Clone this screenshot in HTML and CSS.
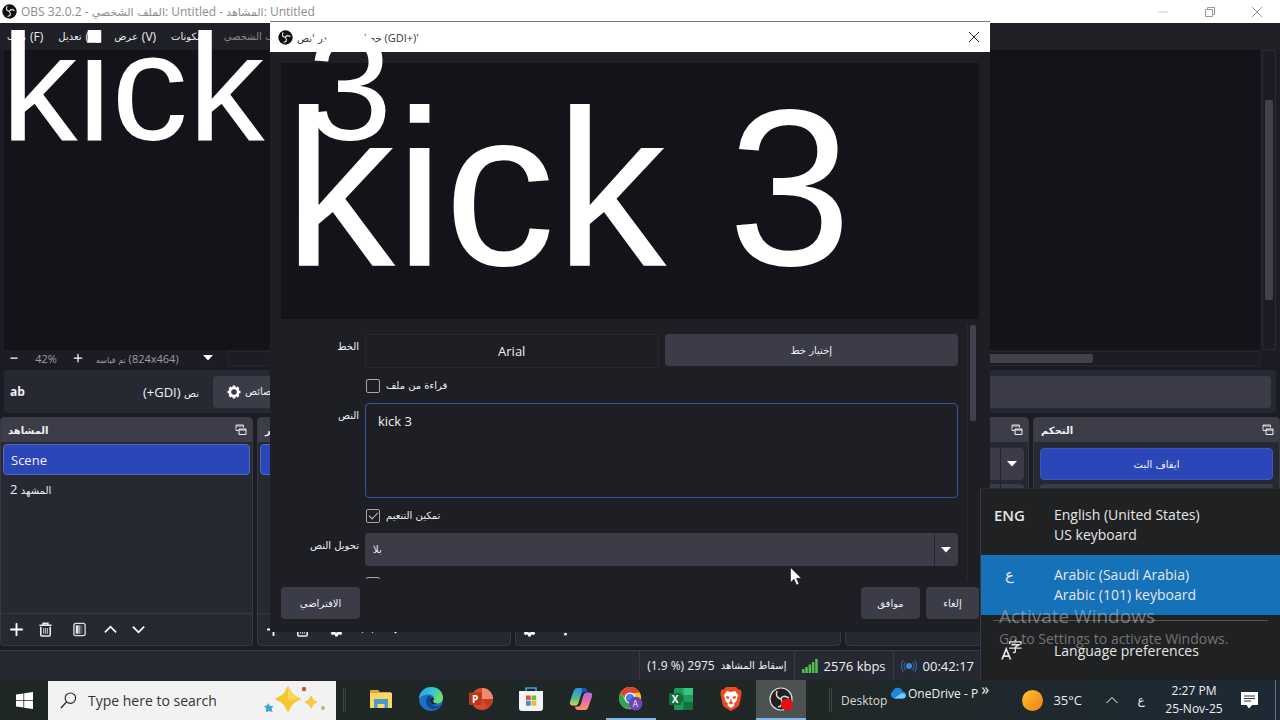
FILE: index.html
```
<!DOCTYPE html>
<html lang="ar">
<head>
  <meta charset="UTF-8">
  <meta name="viewport" content="width=device-width, initial-scale=1.0">
  <title>OBS 32.0.2</title>
  <link rel="stylesheet" href="styles.css">
</head>
<body>
  <svg class="defs" width="0" height="0" aria-hidden="true">
    <symbol id="i-obs" viewBox="0 0 24 24">
      <circle cx="12" cy="12" r="11.5" fill="#111"/>
      <g fill="none" stroke="#e8e8e8" stroke-width="1.7" stroke-linecap="round">
        <path d="M8 4.2c-1.6 3.6-.6 6.600 3.300 7.500"/>
        <path d="M19.500 10.500c-3.600-2-7.200-1.500-7.800 1.400"/>
        <path d="M9.500 19.700c3.800-.6 5.200-4 2.500-7.300"/>
      </g>
      <path d="M8 4.200c-2 3.300-.3 6.700 3 7.100-3.800 1.200-6.500-3.600-3-7.100zM19.700 10.300c-2.700-2.800-6.500-2.500-7.400.7-.4-3.900 5.400-5.300 7.400-.7zM9.300 19.900c3.900-.4 5.500-3.800 3.200-6.400 3.400 2.300 1.300 7.300-3.200 6.400z" fill="#e8e8e8"/>
    </symbol>
    <symbol id="i-plus" viewBox="0 0 16 16"><path d="M8 2v12M2 8h12" stroke="#fff" stroke-width="2" stroke-linecap="round"/></symbol>
    <symbol id="i-minus" viewBox="0 0 16 16"><path d="M3 8h10" stroke="#fff" stroke-width="2" stroke-linecap="round"/></symbol>
    <symbol id="i-trash" viewBox="0 0 16 16"><path d="M1.500 3.500h13M5.500 3V1.500h5V3M3 5v8.500q0 1.500 1.500 1.500h7q1.500 0 1.500-1.500V5" fill="none" stroke="#e8e8ee" stroke-width="1.700"/><path d="M6 6.500v6M8 6.500v6M10 6.500v6" stroke="#b8b8c0" stroke-width="1.200"/></symbol>
    <symbol id="i-filter" viewBox="0 0 16 16"><rect x="2" y="1.500" width="12" height="13" rx="2" fill="#2a2b34" stroke="#dcdce2" stroke-width="1.400"/><path d="M4 3.500h3v9H4z" fill="#e8e8ee"/><path d="M7 3.500h2v9H7z" fill="#a4a4ac"/><path d="M9 3.500h2v9H9z" fill="#5c5d68"/></symbol>
    <symbol id="i-up" viewBox="0 0 16 16"><path d="M2 11l6-6 6 6" fill="none" stroke="#fff" stroke-width="1.800"/></symbol>
    <symbol id="i-down" viewBox="0 0 16 16"><path d="M2 5l6 6 6-6" fill="none" stroke="#fff" stroke-width="1.800"/></symbol>
    <symbol id="i-gear" viewBox="0 0 16 16"><circle cx="8" cy="8" r="4.700" fill="none" stroke="#fff" stroke-width="3"/><g stroke="#fff" stroke-width="3"><path d="M8 .6v2.400M8 13v2.400M.6 8H3M13 8h2.400M2.800 2.800l1.700 1.700M11.500 11.500l1.700 1.700M2.800 13.200l1.700-1.700M11.500 4.500l1.700-1.700"/></g></symbol>
    <symbol id="i-float" viewBox="0 0 12 12"><path d="M4 6.500H1V1h7.500v2.500M1 2h7.500" fill="none" stroke="#d8d8de" stroke-width="1"/><path d="M4 5h7v5.500H4zM4 6h7" fill="#3c3d48" stroke="#f0f0f4" stroke-width="1"/></symbol>
    <symbol id="i-tri" viewBox="0 0 10 6"><path d="M0 0h10L5 5.500z" fill="#fff"/></symbol>
    <symbol id="i-dots" viewBox="0 0 16 16"><circle cx="8" cy="2.500" r="1.500" fill="#fff"/><circle cx="8" cy="8" r="1.500" fill="#fff"/><circle cx="8" cy="13" r="1.500" fill="#fff"/></symbol>
    <symbol id="i-close" viewBox="0 0 12 12"><path d="M1 1l10 10M11 1L1 11" stroke="currentColor" stroke-width="1" fill="none"/></symbol>
  </svg>

  <div class="desktop">
    <div class="obs">
      <header class="titlebar">
        <svg class="logo"><use href="#i-obs"/></svg>
        <span class="title">OBS 32.0.2 - <span class="ar">الملف الشخصي</span>: Untitled - <span class="ar">المشاهد</span>: Untitled</span>
        <div class="window-buttons">
          <button aria-label="Minimize"><svg viewBox="0 0 12 12"><path d="M1 6h10" stroke="#ccc"/></svg></button>
          <button aria-label="Restore"><svg viewBox="0 0 12 12"><path d="M1.500 3.500h7v7h-7zM3.500 3.500v-2h7v7h-2" fill="none" stroke="#999"/></svg></button>
          <button aria-label="Close"><svg><use href="#i-close"/></svg></button>
        </div>
      </header>

      <nav class="menubar">
        <button><span class="ar">ملف</span> (F)</button>
        <button><span class="ar">تعديل</span> (E)</button>
        <button><span class="ar">عرض</span> (V)</button>
        <button><span class="ar">المكونات</span></button>
        <button class="dim"><span class="ar">الملف الشخصي</span></button>
      </nav>

      <main class="preview">
        <div class="canvas"></div>
        <div class="vscroll"><div class="thumb"></div></div>
        <div class="zoombar">
          <button aria-label="Zoom out"><svg><use href="#i-minus"/></svg></button>
          <span class="percent">42%</span>
          <button aria-label="Zoom in"><svg><use href="#i-plus"/></svg></button>
          <span class="scale"><span class="ar">تم قياسه</span> (824x464)</span>
          <button class="scale-menu" aria-label="Scaling"><svg><use href="#i-tri"/></svg></button>
          <div class="hscroll"><div class="thumb"></div></div>
        </div>
      </main>

      <section class="source-bar">
        <b>ab</b>
        <span class="source-name" dir="rtl"><span class="ar">نص</span> (GDI+)</span>
        <button class="props"><svg><use href="#i-gear"/></svg><span class="ar">خصائص</span></button>
        <div class="source-field"></div>
      </section>

      <section class="docks">
        <div class="dock">
          <h2><span class="ar">المشاهد</span><svg><use href="#i-float"/></svg></h2>
          <ul class="list">
            <li class="selected">Scene</li>
            <li><span dir="rtl"><span class="ar">المشهد</span> 2</span></li>
          </ul>
          <div class="tools">
            <button aria-label="Add scene"><svg><use href="#i-plus"/></svg></button>
            <button aria-label="Remove scene"><svg><use href="#i-trash"/></svg></button>
            <button aria-label="Filters"><svg><use href="#i-filter"/></svg></button>
            <button aria-label="Move up"><svg><use href="#i-up"/></svg></button>
            <button aria-label="Move down"><svg><use href="#i-down"/></svg></button>
          </div>
        </div>
        <div class="dock">
          <h2><span class="ar">المصادر</span></h2>
          <ul class="list"><li class="selected"></li></ul>
          <div class="tools">
            <button aria-label="Add source"><svg><use href="#i-plus"/></svg></button>
            <button aria-label="Remove source"><svg><use href="#i-trash"/></svg></button>
            <button aria-label="Source properties"><svg><use href="#i-gear"/></svg></button>
            <button aria-label="Move up"><svg><use href="#i-up"/></svg></button>
            <button aria-label="Move down"><svg><use href="#i-down"/></svg></button>
          </div>
        </div>
        <div class="dock">
          <h2></h2>
          <div class="list"></div>
          <div class="tools mixer-tools">
            <button aria-label="Audio settings"><svg><use href="#i-gear"/></svg></button>
            <button aria-label="Mixer menu"><svg><use href="#i-dots"/></svg></button>
          </div>
        </div>
        <div class="dock">
          <h2><svg><use href="#i-float"/></svg></h2>
          <div class="transitions">
            <button class="combo" aria-label="Transition"><svg><use href="#i-tri"/></svg></button>
            <button class="combo" aria-label="Duration"></button>
          </div>
        </div>
        <div class="dock">
          <h2><span class="ar">التحكم</span><svg><use href="#i-float"/></svg></h2>
          <div class="controls">
            <button class="primary ar">ايقاف البث</button>
            <button aria-label="Record"></button>
          </div>
        </div>
      </section>

      <footer class="statusbar">
        <span>(1.9 %) 2975 <span class="ar">إسقاط المشاهد</span></span>
        <span>
          <svg class="bars" viewBox="0 0 16 14"><path d="M0 10h2.500v4H0zM3.300 8h2.500v6H3.300zM6.600 5.500h2.500V14H6.600zM9.900 3h2.500v11H9.900zM13.200 0h2.500v14h-2.500z" fill="#4fc54f"/></svg>
          2576 kbps
        </span>
        <span>
          <svg class="live" viewBox="0 0 16 14"><circle cx="8" cy="7" r="3" fill="#3b86d8"/><path d="M4.500 3q-3 4 0 8M11.500 3q3 4 0 8M2.300 1q-3.600 6 0 12M13.700 1q3.600 6 0 12" fill="none" stroke="#2d619b" stroke-width="1.200"/></svg>
          00:42:17
        </span>
      </footer>
    </div>

    <div class="taskbar">
      <button class="start" aria-label="Start"><svg viewBox="0 0 16 16"><path d="M0 2.300L7 1.300v6.300H0zM7.700 1.200L16 0v7.600H7.700zM0 8.300h7v6.300l-7-1zM7.700 8.300H16V16l-8.300-1.200z" fill="#fff"/></svg></button>
      <div class="search">
        <svg class="lens" viewBox="0 0 18 18"><circle cx="11" cy="6.500" r="5.500" fill="none" stroke="#222" stroke-width="1.200"/><path d="M7 10.500L1 17" stroke="#222" stroke-width="1.400"/></svg>
        <input type="text" placeholder="Type here to search" aria-label="Search">
        <svg class="sparkle" viewBox="0 0 62 28">
          <path d="M24 1q3 9 12 12-9 3-12 12-3-9-12-12 9-3 12-12z" fill="#f7c52d" stroke="#f7c52d" stroke-width="1.500" stroke-linejoin="round"/>
          <path d="M24 1q3 9 12 12l-12 1z" fill="#fbd95c"/>
          <path d="M47 10q1.500 5 6 6-4.500 1.500-6 6-1.500-4.500-6-6 4.500-1 6-6z" fill="#f5c944" stroke="#f5c944" stroke-linejoin="round"/>
          <path d="M4 17l2 3 3.500 0-2 2.500 1 3.500-3.500-1-3 1.500V22L0 20l3-.5z" fill="#35a9d0"/>
          <circle cx="40" cy="3" r="2.200" fill="#bd5a34"/><circle cx="59" cy="22" r="2" fill="#9bc56b"/>
        </svg>
      </div>
      <div class="divider"></div>
      <div class="apps">
        <button aria-label="File Explorer"><svg viewBox="0 0 24 24"><path d="M1 3h8l2 2h11v4H1z" fill="#d9a634"/><path d="M1 6h22v15H1z" fill="#fbd767"/><path d="M5 12h14v9h-3.500v-4h-7v4H5z" fill="#4a9cc4"/></svg></button>
        <button aria-label="Edge"><svg viewBox="0 0 24 24">
          <defs><linearGradient id="edge" x1="0" y1="0" x2="1" y2=".4"><stop offset="0" stop-color="#2b9be0"/><stop offset=".55" stop-color="#32c4d8"/><stop offset="1" stop-color="#6be06b"/></linearGradient></defs>
          <circle cx="12" cy="12" r="12" fill="#1c6fc4"/><path d="M0 11C1 4 6 0 12 0c7 0 12 5 12 10.500 0 4-3 6-6 6-2.500 0-4-1-4-2 0-.8 1-1.300 1-3 0-2.500-2.500-4-5.500-4-4 0-8 2-9.500 4z" fill="url(#edge)"/><path d="M9 9c-4 4-2 11 4 13 3 .6 6-1 9-4-5 2.500-10 1-11-3-.4-2 .3-4 1.500-5.500C11.500 8.500 10 8.500 9 9z" fill="#12458f"/><path d="M15 11c0 2-1 2.300-1 3.300 0 1.200 1.500 2.200 4 2.200-3 2-7 .5-7-3 0-2 2-3.500 4-2.500z" fill="#1e2827"/></svg></button>
        <button aria-label="PowerPoint"><svg viewBox="0 0 24 24"><circle cx="13" cy="12" r="11" fill="#d8492c"/><path d="M13 1a11 11 0 0 1 11 11H13z" fill="#f08a6c"/><path d="M13 12h11a11 11 0 0 1-5 9z" fill="#c23d20"/><rect x="0" y="5.500" width="12.500" height="12.500" rx="1" fill="#b7361e"/><text x="3" y="15.500" font-size="10" font-weight="700" fill="#fff" font-family="Open Sans">P</text></svg></button>
        <button aria-label="Store"><svg viewBox="0 0 24 24"><path d="M7 4V1h10v3" fill="none" stroke="#3ba3dc" stroke-width="1.600"/><path d="M0 4h24v17q0 3-3 3H3q-3 0-3-3z" fill="#f3f4f5"/><path d="M7 8.500h4.700v4.700H7z" fill="#dd5633"/><path d="M12.500 8.500h4.700v4.700h-4.700z" fill="#7ab83a"/><path d="M7 14h4.700v4.700H7z" fill="#2a93d4"/><path d="M12.500 14h4.700v4.700h-4.700z" fill="#f2b825"/></svg></button>
        <button aria-label="Copilot"><svg viewBox="0 0 24 24">
          <defs><linearGradient id="cpa" x1="0" y1="0" x2="0" y2="1"><stop offset="0" stop-color="#2a8fe8"/><stop offset=".6" stop-color="#52bd92"/><stop offset="1" stop-color="#e8d043"/></linearGradient><linearGradient id="cpb" x1="0" y1="0" x2="0" y2="1"><stop offset="0" stop-color="#b069e8"/><stop offset=".5" stop-color="#ee6aa8"/><stop offset="1" stop-color="#f79b60"/></linearGradient></defs>
          <path d="M8 1h7q2.500 0 3 3.500h-3q-2 0-2.800 2.500L9.500 16q-.8 2.500-3 2.500H4q-4 0-3-4L4.500 4.500Q5.500 1 8 1z" fill="url(#cpa)"/><path d="M16 23H9q-2.500 0-3-3.500h3q2 0 2.800-2.500l2.700-9q.8-2.500 3-2.500H20q4 0 3 4l-3.500 10q-1 3.500-3.500 3.500z" fill="url(#cpb)"/><path d="M13 1h2q2.500 0 3 3.500h-3q-1.500 0-2.500 2z" fill="#1c4fc0"/></svg></button>
        <button class="running" aria-label="Chrome"><svg viewBox="0 0 26 26"><circle cx="12" cy="12" r="12" fill="#f6c531"/><path d="M1.600 6A12 12 0 0 1 22.400 6L12 7 8 14z" fill="#dc4335"/><path d="M1.600 6a12 12 0 0 0 9.400 18l5-9H7z" fill="#31a152"/><circle cx="12" cy="12" r="6" fill="#fff"/><circle cx="12" cy="12" r="4.700" fill="#4384ee"/><circle cx="18" cy="18" r="7.500" fill="#7043b4"/><text x="14.800" y="21.500" font-size="9" fill="#eee" font-family="Open Sans">A</text></svg></button>
        <button aria-label="Excel"><svg viewBox="0 0 24 24"><rect x="5" y="1" width="19" height="22" rx="1.500" fill="#1f9a5a"/><path d="M14.500 1H24v7h-9.500z" fill="#35c481"/><path d="M5 8h9.500v7H5zM14.500 15H24v6.500q0 1.500-1.500 1.500h-8z" fill="#12713c"/><rect x="0" y="6" width="12" height="12" rx="1" fill="#127040"/><text x="2.700" y="15.700" font-size="10" font-weight="700" fill="#fff" font-family="Open Sans">X</text></svg></button>
        <button aria-label="Brave"><svg viewBox="0 0 24 24"><path d="M7 0h10l2.500 2.500 2.500.5.500 4-2 10q-.7 2-2.500 3.500L12 24l-6-3.500Q4.200 19 3.500 17l-2-10L2 3l2.500-.5z" fill="#ee4a23"/><path d="M8 4l4 1 4-1 3 4-1.500 6-2.500 2.500.5 2L12 21l-3.500-2.500.5-2L6.500 14 5 8z" fill="#fff"/><path d="M7 9l3.500.7-1 2.300-2-.5zM17 9l-3.500.7 1 2.300 2-.5zM12 11l1 4 1.500 1-2.500 1.500L9.500 16l1.500-1z" fill="#ee4a23"/></svg></button>
        <button class="running active" aria-label="OBS"><svg viewBox="0 0 24 24"><circle cx="12" cy="12" r="11" fill="#211f20" stroke="#ddd" stroke-width="1.200"/><path d="M8 4c-1.500 4 0 7 4 8M20 11c-4-2.500-7.500-2-8 1M9 20c4-.5 5.500-4 3-8" fill="none" stroke="#d8d8d8" stroke-width="1.600"/><circle cx="18" cy="17.500" r="6" fill="#e60f0f"/></svg></button>
      </div>
      <div class="divider"></div>
      <span class="desk-label">Desktop</span>
      <span class="onedrive"><svg viewBox="0 0 16 12"><path d="M4 11.500A4 4 0 0 1 3 4 5 5 0 0 1 12.500 4.500a3.500 3.500 0 0 1 0 7z" fill="#2187dd"/><path d="M4 11.500l7-5q4-1 4.800 2-.3 3-3.300 3z" fill="#73cdfa"/></svg>OneDrive - P</span>
      <span class="more">»</span>
      <div class="weather"><svg viewBox="0 0 20 20"><defs><linearGradient id="sun" x1="0" y1="0" x2="1" y2="1"><stop offset="0" stop-color="#fdc435"/><stop offset="1" stop-color="#f27d12"/></linearGradient></defs><circle cx="10" cy="10" r="10" fill="url(#sun)"/></svg>35°C</div>
      <button class="tray" aria-label="Show hidden icons"><svg viewBox="0 0 12 12"><path d="M.5 9L6 3.500 11.500 9" fill="none" stroke="#fff"/></svg></button>
      <span class="input-lang ar">ع</span>
      <div class="clock"><time>2:27 PM</time><time>25-Nov-25</time></div>
      <button class="notify" aria-label="Notifications"><svg viewBox="0 0 17 17"><path d="M0 0h17v13h-6l-3 3.500L5.500 13H0z" fill="#fff"/><path d="M3 4h11M3 6.500h11M3 9h7" stroke="#333"/></svg></button>
    </div>
  </div>

  <div class="dialog" role="dialog" aria-label="Properties">
    <div class="dialog-title">
      <svg class="logo"><use href="#i-obs"/></svg>
      <span><span class="ar">خصائص لمصدر 'نص</span> (GDI+)'</span>
      <button aria-label="Close dialog"><svg><use href="#i-close"/></svg></button>
    </div>
    <div class="dialog-preview">kick 3</div>
    <div class="form-wrap">
      <form class="form">
        <span class="label ar">الخط</span>
        <div class="font-row">
          <output>Arial</output>
          <button type="button" class="ar">إختيار خط</button>
        </div>
        <label class="check"><input type="checkbox"><span class="ar">قراءة من ملف</span></label>
        <label class="label ar" for="text">النص</label>
        <textarea id="text">kick 3</textarea>
        <label class="check"><input type="checkbox" checked><span class="ar">تمكين التنعيم</span></label>
        <label class="label ar" for="transform">تحويل النص</label>
        <div class="select">
          <select id="transform" class="ar"><option>بلا</option></select>
          <svg><use href="#i-tri"/></svg>
        </div>
        <label class="check"><input type="checkbox"><span class="ar">تدرج اللون</span></label>
      </form>
      <div class="form-scroll"><div class="thumb"></div></div>
    </div>
    <div class="dialog-buttons">
      <button class="ar defaults">الافتراضي</button>
      <button class="ar">موافق</button>
      <button class="ar cancel">إلغاء</button>
    </div>
  </div>

  <div class="flyout">
    <button class="lang"><b>ENG</b><span>English (United States)<br>US keyboard</span></button>
    <button class="lang current"><b class="ar">ع</b><span>Arabic (Saudi Arabia)<br>Arabic (101) keyboard</span></button>
    <hr>
    <a class="prefs" href="#"><svg viewBox="0 0 22 22"><path d="M1 21L5.500 10 10 21M2.500 17.500h6" fill="none" stroke="#e6e6e6" stroke-width="1.800"/><path d="M9 5V2.500h12V5M15 0v2.500M11 5.500h8L15 8v4.500q0 1.500-2.500 1M8.500 9h13" fill="none" stroke="#e6e6e6" stroke-width="1.400"/></svg>Language preferences</a>
  </div>

  <div class="activate"><strong>Activate Windows</strong><span>Go to Settings to activate Windows.</span></div>
  <div class="overlay-text">kick 3</div>
  <svg class="cursor" viewBox="0 0 12 19"><path d="M.5.500v15l3.500-3.300 2.500 5.800 2.500-1-2.500-5.700h5z" fill="#fff" stroke="#111" stroke-width=".6"/></svg>
</body>
</html>
```

FILE: styles.css
```
* {
  box-sizing: border-box;
}
body {
  margin: 0;
  font-family: "Open Sans", "DejaVu Sans", sans-serif;
  font-size: 13px;
  color: #f0f0f4;
  background: #1c1d24;
  overflow: hidden;
}
button, input, select, textarea {
  font: inherit;
  color: inherit;
  background: none;
  border: none;
  padding: 0;
  margin: 0;
}
button {
  display: flex;
  align-items: center;
  justify-content: center;
}
svg {
  display: block;
  flex: none;
  width: 12px;
  height: 12px;
}
.defs {
  position: absolute;
  width: 0;
  height: 0;
}
.ar {
  font-family: "DejaVu Sans", sans-serif;
  font-size: 10px;
}
.logo {
  width: 15px;
  height: 15px;
}
.thumb {
  background: #40414d;
  border-radius: 2px;
}
.desktop {
  display: flex;
  flex-direction: column;
  height: 100vh;
}
.obs {
  flex: 1;
  display: flex;
  flex-direction: column;
  min-height: 0;
}

/* main window */
.titlebar {
  height: 23px;
  display: flex;
  align-items: center;
  gap: 4px;
  padding-left: 2px;
  background: #fff;
  color: #8c8c8c;
  font-size: 12px;
}
.titlebar .ar {
  font-size: 11px;
}
.window-buttons {
  display: flex;
  margin-left: auto;
}
.window-buttons button {
  width: 47px;
  color: #999;
}
.menubar {
  height: 27px;
  display: flex;
  align-items: center;
  gap: 15px;
  padding-left: 7px;
  background: #1f2026;
  font-size: 12px;
}
.menubar button {
  gap: 4px;
}
.menubar .dim {
  color: #888;
}
.preview {
  flex: 1;
  display: grid;
  grid-template-columns: 1fr 14px;
  grid-template-rows: 1fr 16px;
  column-gap: 2px;
  padding: 0 4px;
}
.canvas {
  background: #131419;
}
.vscroll {
  border: 1px solid #2b2c33;
  padding: 49px 2px;
}
.vscroll .thumb {
  height: 200px;
}
.zoombar {
  display: flex;
  align-items: center;
  color: #9c9ca4;
  font-size: 11px;
}
.zoombar svg {
  width: 10px;
  height: 10px;
}
.zoombar button {
  width: 20px;
}
.zoombar .ar {
  font-size: 8px;
}
.percent {
  width: 44px;
  text-align: center;
}
.scale {
  width: 110px;
  padding-left: 8px;
  white-space: nowrap;
}
.zoombar .scale-menu {
  width: 20px;
}
.hscroll {
  flex: 1;
  height: 15px;
  margin-left: 10px;
  border: 1px solid #26272d;
  padding: 2px 166px 2px 400px;
}
.hscroll .thumb {
  height: 9px;
}
.source-bar {
  display: flex;
  align-items: center;
  height: 43px;
  margin: 4px;
  padding: 5px;
  background: #272932;
  border-radius: 4px;
}
.source-bar b {
  width: 18px;
  padding-left: 1px;
  font-size: 12px;
}
.source-name {
  width: 186px;
  padding-right: 14px;
  white-space: nowrap;
}
.props {
  width: 90px;
  height: 32px;
  gap: 4px;
  justify-content: flex-start;
  padding-left: 14px;
  background: #3b3c47;
  border-radius: 4px;
}
.props svg {
  width: 14px;
  height: 14px;
}
.source-field {
  flex: 1;
  height: 32px;
  background: #3b3c47;
  border-radius: 4px;
}
.docks {
  display: grid;
  grid-template-columns: 253fr 254fr 326fr 184fr 247fr;
  column-gap: 4px;
  height: 229px;
}
.dock {
  display: flex;
  flex-direction: column;
  background: #272932;
  border: 1px solid #383943;
  border-radius: 4px;
  overflow: hidden;
}
.dock h2 {
  display: flex;
  align-items: center;
  justify-content: space-between;
  height: 24px;
  margin: 0;
  padding: 0 5px 0 7px;
  background: #3c3d48;
}
.dock h2 svg {
  margin-left: auto;
}
.list {
  flex: 1;
  margin: 0;
  padding: 2px;
  list-style: none;
}
.list li {
  height: 28px;
  display: flex;
  align-items: center;
  padding-left: 7px;
}
.list .selected {
  height: 31px;
  background: #2b46b6;
  border: 1px solid #5468bf;
  border-radius: 4px;
}
.tools {
  display: flex;
  align-items: center;
  height: 32px;
  gap: 13px;
  padding: 0 6px;
  border-top: 1px solid #383943;
}
.tools button {
  width: 18px;
}
.tools svg {
  width: 15px;
  height: 15px;
}
.dock .tools button:nth-child(2) {
  margin: 0 3px 0 -2px;
}
.dock .tools button:last-child {
  margin-left: -3px;
}
.dock .mixer-tools {
  padding-left: 4px;
  gap: 21px;
}
.transitions {
  display: grid;
  gap: 4px;
  padding: 6px 4px;
}
.combo {
  height: 32px;
  justify-content: flex-end;
  padding-right: 7px;
  background: linear-gradient(to left, #3b3c47 23px, #23242c 23px, #23242c 24px, #3b3c47 24px);
  border-radius: 4px;
}
.combo svg, .zoombar .scale-menu svg, .select svg {
  width: 10px;
  height: 6px;
}
.controls {
  display: grid;
  gap: 4px;
  padding: 6px;
}
.controls button {
  height: 32px;
  background: #3b3c47;
  border-radius: 4px;
}
.controls .primary {
  background: #2b46b6;
  border: 1px solid #3c55c0;
}
.statusbar {
  display: flex;
  justify-content: flex-end;
  height: 30px;
  margin-top: 4px;
  padding-right: 299px;
  background: #272932;
  border-top: 1px solid #3a3b44;
}
.statusbar > span {
  display: flex;
  align-items: center;
  gap: 6px;
  padding: 0 7px;
  border-left: 1px solid #3a3b44;
  font-size: 12px;
  white-space: nowrap;
}
.statusbar svg {
  width: 16px;
  height: 14px;
}
.statusbar > span + span {
  font-size: 13px;
}

/* source properties */
.dialog {
  position: absolute;
  left: 270px;
  top: 21px;
  width: 720px;
  background: #1e1f24;
  border-top: 1px solid #777;
}
.dialog-title {
  display: flex;
  align-items: center;
  gap: 4px;
  height: 30px;
  padding: 0 10px 0 8px;
  background: #fff;
  color: #333;
  font-size: 11px;
}
.dialog-title button {
  margin-left: auto;
}
.dialog-preview {
  height: 256px;
  margin: 11px 11px 0;
  padding: 14px 3px;
  background: #131419;
  color: #fff;
  font: 222px/1 "Liberation Sans", Arial, sans-serif;
  white-space: nowrap;
}
.form-wrap {
  display: flex;
  height: 255px;
  margin: 5px 13px 0 11px;
  overflow: hidden;
}
.form {
  flex: 1;
  display: grid;
  grid-template-columns: 79px 1fr;
  grid-template-rows: 34px 15px 95px 15px 33px 15px;
  gap: 10px 5px;
  padding-top: 10px;
}
.label {
  text-align: right;
  padding: 7px 1px 0 0;
}
.font-row {
  display: grid;
  grid-template-columns: 1fr 1fr;
  gap: 6px;
}
.font-row output {
  display: flex;
  align-items: center;
  justify-content: center;
  border: 1px solid #27282d;
}
.font-row button {
  height: 32px;
  background: #3b3c47;
  border-radius: 4px;
}
.check {
  grid-column: 2;
  display: flex;
  align-items: center;
  gap: 6px;
  padding-left: 1px;
}
.check input {
  appearance: none;
  display: grid;
  place-items: center;
  width: 14px;
  height: 14px;
  border: 1px solid #a5a5ab;
  border-radius: 2px;
}
.check input:checked::before {
  content: "";
  width: 8px;
  height: 4px;
  margin-bottom: 3px;
  border: solid #c8c8cc;
  border-width: 0 0 1px 1px;
  transform: rotate(-45deg);
}
textarea {
  resize: none;
  padding: 8px 12px;
  border: 1px solid #3a50a8;
  border-radius: 4px;
}
.select {
  display: grid;
  align-items: center;
  background: linear-gradient(to left, #3b3c47 23px, #272830 23px, #272830 24px, #3b3c47 24px);
  border-radius: 4px;
}
.select select, .select svg {
  grid-area: 1 / 1;
}
.select svg {
  justify-self: end;
  margin-right: 7px;
}
.select select {
  appearance: none;
  width: 100%;
  height: 100%;
  padding-left: 8px;
}
.form-scroll {
  width: 10px;
  margin-left: 9px;
  border-left: 1px solid #292a30;
}
.form-scroll .thumb {
  height: 96px;
  margin: 1px 1px 0 2px;
}
.dialog-buttons {
  display: flex;
  gap: 6px;
  padding: 8px 11px 13px;
}
.dialog-buttons button {
  width: 59px;
  height: 32px;
  background: #3b3c47;
  border-radius: 4px;
}
.dialog-buttons .defaults {
  width: 79px;
  margin-right: auto;
}
.dialog-buttons .cancel {
  width: 53px;
}

/* keyboard layout flyout */
.flyout {
  position: absolute;
  right: 0;
  bottom: 40px;
  width: 300px;
  height: 192px;
  padding-top: 6px;
  background: #202123;
  border-left: 1px solid #3a3b3d;
  border-top: 1px solid #2b2c2e;
  font-size: 14px;
}
.lang {
  width: 100%;
  height: 60px;
  align-items: flex-start;
  justify-content: flex-start;
  padding: 10px 0 0 13px;
  text-align: left;
  line-height: 20px;
  color: #e6e6e6;
}
.lang b {
  width: 60px;
  font-weight: 600;
  font-size: 15px;
}
.lang.current {
  background: #1571b8;
}
.lang.current b {
  padding-left: 11px;
  font-weight: 400;
}
.flyout hr {
  margin: 5px 12px 0;
  border: none;
  border-top: 1px solid #555;
}
.prefs {
  display: flex;
  align-items: center;
  gap: 32px;
  padding: 18px 20px;
  color: #e6e6e6;
  text-decoration: none;
}
.prefs svg {
  width: 21px;
  height: 22px;
}
.activate {
  position: absolute;
  left: 999px;
  top: 604px;
  display: flex;
  flex-direction: column;
  color: rgba(190, 190, 190, 0.55);
  font-size: 14px;
  line-height: 22px;
}
.activate strong {
  font-size: 19px;
  font-weight: 400;
  line-height: 24px;
}
.overlay-text {
  position: absolute;
  left: 1px;
  top: 10px;
  color: #fff;
  font: 153px/1 "Liberation Sans", Arial, sans-serif;
  white-space: nowrap;
  pointer-events: none;
}
.cursor {
  position: absolute;
  left: 790px;
  top: 567px;
  width: 12px;
  height: 19px;
}

/* taskbar */
.taskbar {
  display: flex;
  align-items: center;
  height: 40px;
  background: linear-gradient(to right, #1e2725, #202827 65%, #1d2935);
  font-size: 12px;
  white-space: nowrap;
}
.start {
  width: 48px;
  height: 40px;
}
.start svg {
  width: 17px;
  height: 17px;
}
.search {
  display: flex;
  align-items: center;
  width: 288px;
  height: 39px;
  padding: 0 10px 0 12px;
  background: #f2f2f2;
}
.lens {
  width: 17px;
  height: 17px;
}
.search input {
  flex: 1;
  min-width: 0;
  padding-left: 11px;
  font-size: 14px;
}
.search input::placeholder {
  color: #333;
  opacity: 1;
}
.sparkle {
  width: 62px;
  height: 28px;
}
.divider {
  width: 3px;
  height: 24px;
  margin: 0 10px 0 7px;
  border: solid #3c4443;
  border-width: 0 1px;
}
.apps {
  display: flex;
}
.apps button {
  width: 50px;
  height: 40px;
  border-bottom: 2px solid transparent;
}
.apps svg {
  width: 24px;
  height: 24px;
}
.apps .running {
  border-color: #83b9e6;
}
.apps .active {
  background: #4c5252;
}
.apps + .divider {
  margin: 0 9px 0 23px;
}
.desk-label {
  width: 49px;
  color: #d8d8d8;
}
.onedrive {
  display: flex;
  align-items: center;
  gap: 2px;
  padding-bottom: 14px;
  font-size: 12px;
}
.onedrive svg {
  width: 16px;
  height: 12px;
}
.more {
  padding: 0 0 22px 3px;
  font-size: 16px;
}
.weather {
  display: flex;
  align-items: center;
  gap: 10px;
  margin-left: auto;
  font-size: 13px;
}
.weather svg {
  width: 21px;
  height: 21px;
}
.tray {
  margin-left: 24px;
}
.input-lang {
  width: 46px;
  text-align: center;
  font-size: 12px;
}
.clock {
  display: flex;
  flex-direction: column;
  align-items: center;
  width: 60px;
  line-height: 18px;
}
.notify {
  width: 52px;
  height: 40px;
  margin-right: 4px;
  border-right: 1px solid #6a7075;
}
.notify svg {
  width: 17px;
  height: 17px;
}
```
